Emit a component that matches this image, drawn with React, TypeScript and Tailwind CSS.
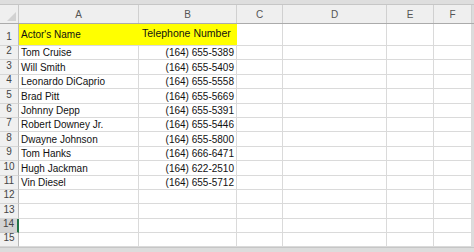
const cols = [
  { key: "A", w: "w-[120px]" },
  { key: "B", w: "w-[98px]" },
  { key: "C", w: "w-[46px]" },
  { key: "D", w: "w-[104px]" },
  { key: "E", w: "w-[47px]" },
  { key: "F", w: "w-[38px]" },
];

const actors: [string, string][] = [
  ["Tom Cruise", "(164) 655-5389"],
  ["Will Smith", "(164) 655-5409"],
  ["Leonardo DiCaprio", "(164) 655-5558"],
  ["Brad Pitt", "(164) 655-5669"],
  ["Johnny Depp", "(164) 655-5391"],
  ["Robert Downey Jr.", "(164) 655-5446"],
  ["Dwayne Johnson", "(164) 655-5800"],
  ["Tom Hanks", "(164) 666-6471"],
  ["Hugh Jackman", "(164) 622-2510"],
  ["Vin Diesel", "(164) 655-5712"],
];

const rows: [string, string][] = [...actors, ["", ""], ["", ""], ["", ""], ["", ""]];

function RowHead({ n, active }: { n: number; active?: boolean }) {
  return (
    <div
      className={
        active
          ? "w-[19px] shrink-0 h-full flex items-end justify-center pb-px bg-[#d3d3d3] border-r-2 border-r-[#217346] border-b border-b-[#c8c8c8] text-[#444]"
          : "w-[19px] shrink-0 h-full flex items-end justify-center pb-px bg-[#f0f0f0] border-r border-r-[#b8b8b8] border-b border-b-[#d6d6d6] text-[#444]"
      }
    >
      {n}
    </div>
  );
}

export default function App() {
  return (
    <div
      className="w-[474px] h-[252px] bg-white overflow-hidden flex flex-col text-[10px] text-[#111]"
      style={{ fontFamily: '"Liberation Sans", Arial, sans-serif' }}
    >
      <div className="h-[5px] shrink-0 bg-[#dedede] border-b border-[#c6c6c6]" />

      <div className="h-[19px] shrink-0 flex bg-[#efefef] border-b border-[#ababab] text-[#555]">
        <div className="w-[19px] shrink-0 relative border-r border-[#c9c9c9]">
          <div className="absolute right-[2px] bottom-[2px] w-0 h-0 border-l-[9px] border-l-transparent border-b-[9px] border-b-[#d2d2d2]" />
        </div>
        {cols.map((c) => (
          <div
            key={c.key}
            className={`${c.w} shrink-0 flex items-center justify-center border-r border-[#d0d0d0]`}
          >
            {c.key}
          </div>
        ))}
        <div className="flex-1 bg-[#dcdcdc]" />
      </div>

      <div className="h-[22px] shrink-0 flex">
        <RowHead n={1} />
        <div className="w-[120px] shrink-0 flex items-end pl-[2px] pb-[3px] bg-[#ffff00] border-b border-[#dadada]">
          Actor's Name
        </div>
        <div className="w-[98px] shrink-0 flex items-end pl-[3px] pb-[3px] text-[10.5px] bg-[#ffff00] border-b border-[#dadada]">
          Telephone Number
        </div>
        <div className="w-[46px] shrink-0 border-r border-b border-[#dadada]" />
        <div className="w-[104px] shrink-0 border-r border-b border-[#dadada]" />
        <div className="w-[47px] shrink-0 border-r border-b border-[#dadada]" />
        <div className="w-[38px] shrink-0 border-r border-b border-[#dadada]" />
        <div className="flex-1 bg-[#dcdcdc]" />
      </div>

      {rows.map(([name, phone], i) => (
        <div key={i} className="h-[14.4px] shrink-0 flex">
          <RowHead n={i + 2} active={i + 2 === 14} />
          <div className="w-[120px] shrink-0 flex items-end pl-[2px] leading-[13px] border-r border-b border-[#dadada]">
            {name}
          </div>
          <div className="w-[98px] shrink-0 flex items-end justify-end pr-[2px] leading-[13px] border-r border-b border-[#dadada]">
            {phone}
          </div>
          <div className="w-[46px] shrink-0 border-r border-b border-[#dadada]" />
          <div className="w-[104px] shrink-0 border-r border-b border-[#dadada]" />
          <div className="w-[47px] shrink-0 border-r border-b border-[#dadada]" />
          <div className="w-[38px] shrink-0 border-r border-b border-[#dadada]" />
          <div className="flex-1 bg-[#dcdcdc]" />
        </div>
      ))}

      <div className="flex-1 bg-[#dcdcdc] border-t border-[#c6c6c6]" />
    </div>
  );
}
